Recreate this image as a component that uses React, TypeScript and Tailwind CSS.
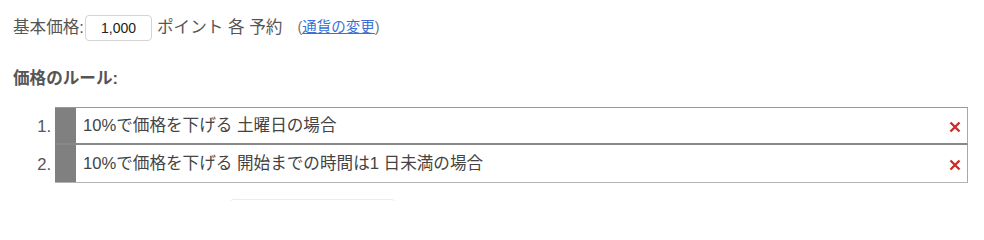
import React from "react";

const rules = [
  "10%で価格を下げる 土曜日の場合",
  "10%で価格を下げる 開始までの時間は1 日未満の場合",
];

const font = { fontFamily: '"Liberation Sans", "Noto Sans CJK JP", sans-serif' };

const CrossIcon = () => (
  <svg width="12" height="12" viewBox="0 0 12 12" aria-hidden="true">
    <path d="M1.5 1.5 L10.5 10.5 M10.5 1.5 L1.5 10.5" stroke="#c9302c" strokeWidth="2.4" strokeLinecap="butt" />
  </svg>
);

export default function App() {
  return (
    <div className="w-[984px] h-[201px] overflow-hidden bg-white text-[#555] pl-[13px] pt-[15px]" style={font}>
      <div className="flex items-center h-[26px] text-[16.6px]">
        <span>基本価格:</span>
        <input
          defaultValue="1,000"
          className="ml-[1px] w-[67px] h-[26px] rounded-[4px] border border-[#d4d4d4] text-center text-[14px] text-[#222] outline-none"
        />
        <span className="ml-[5px]">ポイント 各 予約</span>
        <span className="ml-[15px] text-[14.5px] text-[#777]">
          (<a href="#" className="text-[#3a6fd8] underline">通貨の変更</a>)
        </span>
      </div>

      <h3 className="mt-[27px] text-[16.6px] font-bold text-[#555] leading-[22px]">価格のルール:</h3>

      <ol className="mt-[17px] w-[955px]">
        {rules.map((rule, idx) => (
          <li key={idx} className="flex items-stretch h-[38px]">
            <span className="w-[42px] pr-[4px] pt-[2px] flex items-center justify-end text-[16.6px] text-[#555]">{idx + 1}.</span>
            <div
              className={
                "flex flex-1 border-r border-[#a8a8a8] " +
                (idx === 0 ? "border-t border-t-[#999] border-b-2 border-b-[#888]" : "border-b border-b-[#b4b4b4]")
              }
            >
              <div className="w-[21px] bg-[#808080]" />
              <div className="flex flex-1 items-center justify-between pl-[7px] pr-[6px] pt-[2px] text-[16.6px] text-[#444]">
                <span>{rule}</span>
                <CrossIcon />
              </div>
            </div>
          </li>
        ))}
      </ol>

      <div className="ml-[217px] mt-[16px] w-[165px] h-[20px] rounded-t-[4px] border-t border-x border-[#ececec]" />
    </div>
  );
}
